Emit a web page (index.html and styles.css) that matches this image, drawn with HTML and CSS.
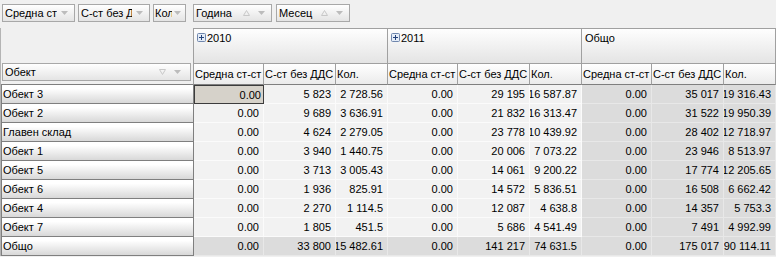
FILE: index.html
```html
<!DOCTYPE html>
<html lang="bg">
<head>
  <meta charset="UTF-8">
  <title>Обобщена таблица</title>
  <link rel="stylesheet" href="styles.css">
</head>
<body>

<div class="filter-bar">
  <div class="filter-group data-fields">
    <div class="field-btn w-avg">
      <span class="field-label">Средна ст-ст</span>
      <svg class="drop" width="7" height="4" viewBox="0 0 7 4"><polygon points="0,0 7,0 3.5,4"/></svg>
    </div>
    <div class="field-btn w-cost">
      <span class="field-label">С-ст без ДДС</span>
      <svg class="drop" width="7" height="4" viewBox="0 0 7 4"><polygon points="0,0 7,0 3.5,4"/></svg>
    </div>
    <div class="field-btn w-qty">
      <span class="field-label">Кол.</span>
      <svg class="drop" width="7" height="4" viewBox="0 0 7 4"><polygon points="0,0 7,0 3.5,4"/></svg>
    </div>
  </div>
  <div class="filter-group column-fields">
    <div class="field-btn w-year">
      <span class="field-label">Година</span>
      <svg class="sort" width="7" height="6" viewBox="0 0 7 6"><polygon points="3.5,0.5 6.5,5.5 0.5,5.5"/></svg>
      <svg class="drop" width="7" height="4" viewBox="0 0 7 4"><polygon points="0,0 7,0 3.5,4"/></svg>
    </div>
    <div class="field-btn w-month">
      <span class="field-label">Месец</span>
      <svg class="sort" width="7" height="6" viewBox="0 0 7 6"><polygon points="3.5,0.5 6.5,5.5 0.5,5.5"/></svg>
      <svg class="drop" width="7" height="4" viewBox="0 0 7 4"><polygon points="0,0 7,0 3.5,4"/></svg>
    </div>
  </div>
</div>

<div class="pivot">
  <div class="corner">
    <div class="field-btn w-object">
      <span class="field-label">Обект</span>
      <svg class="sort" width="7" height="6" viewBox="0 0 7 6"><polygon points="0.5,0.5 6.5,0.5 3.5,5.5"/></svg>
      <svg class="drop" width="7" height="4" viewBox="0 0 7 4"><polygon points="0,0 7,0 3.5,4"/></svg>
    </div>
  </div>

  <div class="year-head">
    <svg class="expand" width="9" height="9" viewBox="0 0 9 9"><rect x="0.5" y="0.5" width="8" height="8" rx="1"/><path d="M2 4.5h5M4.5 2v5"/></svg>
    <span>2010</span>
  </div>
  <div class="year-head">
    <svg class="expand" width="9" height="9" viewBox="0 0 9 9"><rect x="0.5" y="0.5" width="8" height="8" rx="1"/><path d="M2 4.5h5M4.5 2v5"/></svg>
    <span>2011</span>
  </div>
  <div class="year-head"><span>Общо</span></div>

  <div class="field-head">Средна ст-ст</div>
  <div class="field-head">С-ст без ДДС</div>
  <div class="field-head">Кол.</div>
  <div class="field-head">Средна ст-ст</div>
  <div class="field-head">С-ст без ДДС</div>
  <div class="field-head">Кол.</div>
  <div class="field-head">Средна ст-ст</div>
  <div class="field-head">С-ст без ДДС</div>
  <div class="field-head">Кол.</div>

  <div class="row-head">Обект 3</div>
  <div class="cell selected">0.00</div><div class="cell">5 823</div><div class="cell">2 728.56</div>
  <div class="cell">0.00</div><div class="cell">29 195</div><div class="cell">16 587.87</div>
  <div class="cell total">0.00</div><div class="cell total">35 017</div><div class="cell total">19 316.43</div>

  <div class="row-head">Обект 2</div>
  <div class="cell">0.00</div><div class="cell">9 689</div><div class="cell">3 636.91</div>
  <div class="cell">0.00</div><div class="cell">21 832</div><div class="cell">16 313.47</div>
  <div class="cell total">0.00</div><div class="cell total">31 522</div><div class="cell total">19 950.39</div>

  <div class="row-head">Главен склад</div>
  <div class="cell">0.00</div><div class="cell">4 624</div><div class="cell">2 279.05</div>
  <div class="cell">0.00</div><div class="cell">23 778</div><div class="cell">10 439.92</div>
  <div class="cell total">0.00</div><div class="cell total">28 402</div><div class="cell total">12 718.97</div>

  <div class="row-head">Обект 1</div>
  <div class="cell">0.00</div><div class="cell">3 940</div><div class="cell">1 440.75</div>
  <div class="cell">0.00</div><div class="cell">20 006</div><div class="cell">7 073.22</div>
  <div class="cell total">0.00</div><div class="cell total">23 946</div><div class="cell total">8 513.97</div>

  <div class="row-head">Обект 5</div>
  <div class="cell">0.00</div><div class="cell">3 713</div><div class="cell">3 005.43</div>
  <div class="cell">0.00</div><div class="cell">14 061</div><div class="cell">9 200.22</div>
  <div class="cell total">0.00</div><div class="cell total">17 774</div><div class="cell total">12 205.65</div>

  <div class="row-head">Обект 6</div>
  <div class="cell">0.00</div><div class="cell">1 936</div><div class="cell">825.91</div>
  <div class="cell">0.00</div><div class="cell">14 572</div><div class="cell">5 836.51</div>
  <div class="cell total">0.00</div><div class="cell total">16 508</div><div class="cell total">6 662.42</div>

  <div class="row-head">Обект 4</div>
  <div class="cell">0.00</div><div class="cell">2 270</div><div class="cell">1 114.5</div>
  <div class="cell">0.00</div><div class="cell">12 087</div><div class="cell">4 638.8</div>
  <div class="cell total">0.00</div><div class="cell total">14 357</div><div class="cell total">5 753.3</div>

  <div class="row-head">Обект 7</div>
  <div class="cell">0.00</div><div class="cell">1 805</div><div class="cell">451.5</div>
  <div class="cell">0.00</div><div class="cell">5 686</div><div class="cell">4 541.49</div>
  <div class="cell total">0.00</div><div class="cell total">7 491</div><div class="cell total">4 992.99</div>

  <div class="row-head">Общо</div>
  <div class="cell total">0.00</div><div class="cell total">33 800</div><div class="cell total">15 482.61</div>
  <div class="cell total">0.00</div><div class="cell total">141 217</div><div class="cell total">74 631.5</div>
  <div class="cell total">0.00</div><div class="cell total">175 017</div><div class="cell total">90 114.11</div>
</div>

</body>
</html>
```

FILE: styles.css
```css
:root {
  --panel-bg: #f0f0f0;
  --header-line: #a0a0a0;
  --button-line: #7f7f7f;
  --cell-bg: #f2f2f2;
  --cell-line: #fbfbfb;
  --total-bg: #dcdcdc;
  --total-line: #e8e8e8;
  --arrow: #bcbcbc;
}

* {
  margin: 0;
  padding: 0;
  box-sizing: border-box;
}

html, body {
  height: 100%;
  overflow: hidden;
}

body {
  font-family: 'Liberation Sans', Arial, sans-serif;
  font-size: 11px;
  color: #000;
  background-color: var(--panel-bg);
}

/* field list above the grid */
.filter-bar {
  height: 28px;
  display: grid;
  grid-template-columns: 193px 1fr;
  padding-top: 4px;
}

.filter-group {
  display: flex;
  gap: 3px;
}

.data-fields {
  padding-left: 2px;
}

.column-fields {
  gap: 4px;
}

.field-btn {
  height: 18px;
  display: flex;
  align-items: center;
  gap: 4px;
  padding: 0 6px 0 2px;
  border: 1px solid #a8a8a8;
  background: linear-gradient(#ffffff, #e4e4e4);
}

.field-label {
  flex: 1;
  min-width: 0;
  overflow: hidden;
  white-space: nowrap;
}

.drop {
  flex-shrink: 0;
  fill: var(--arrow);
}

.sort {
  flex-shrink: 0;
  margin-right: 4px;
  fill: none;
  stroke: #c8c8c8;
  stroke-width: 1;
}

.w-avg { width: 73px; }
.w-cost { width: 72px; }
.w-qty { width: 33px; gap: 2px; padding: 0 4px 0 1px; }
.w-year { width: 79px; }
.w-month { width: 74px; }
.w-object { width: 189px; padding-right: 9px; }

/* pivot grid */
.pivot {
  display: grid;
  grid-template-columns: 193px repeat(3, 70px 72px 52px);
  grid-template-rows: 35px 22px repeat(9, 19px);
  border-left: 1px solid #b4b4b4;
}

.corner {
  grid-row: 1 / 3;
  display: flex;
  align-items: flex-end;
  padding: 0 0 3px 1px;
  border-right: 1px solid var(--header-line);
  border-bottom: 1px solid var(--button-line);
}

.year-head {
  grid-column: span 3;
  display: flex;
  align-items: flex-start;
  gap: 1px;
  padding: 4px 0 0 3px;
  border-top: 1px solid var(--header-line);
  border-right: 1px solid var(--header-line);
  background: linear-gradient(#fefefe, #e4e4e4);
  line-height: 10px;
}

.expand rect {
  fill: #e4ecf7;
  stroke: #7087ad;
}

.expand path {
  stroke: #24427a;
  stroke-width: 1;
}

.field-head {
  display: flex;
  align-items: center;
  padding-left: 1px;
  overflow: hidden;
  white-space: nowrap;
  border-top: 1px solid var(--header-line);
  border-right: 1px solid var(--header-line);
  border-bottom: 1px solid var(--button-line);
  background: linear-gradient(#ffffff, #ebebeb);
}

.row-head {
  display: flex;
  align-items: center;
  padding-left: 1px;
  white-space: nowrap;
  border: 1px solid var(--button-line);
  border-top: none;
  background: linear-gradient(#ffffff 20%, #d8d8d8);
}

.cell {
  display: flex;
  align-items: center;
  justify-content: flex-end;
  padding-right: 4px;
  overflow: hidden;
  white-space: nowrap;
  background-color: var(--cell-bg);
  border-right: 1px solid var(--cell-line);
  border-bottom: 1px solid var(--cell-line);
}

.cell.total {
  background-color: var(--total-bg);
  border-color: var(--total-line);
}

.cell.selected {
  background-color: #d6d2ca;
  border: 1px solid #3c3c3c;
  padding-right: 2px;
}
```
